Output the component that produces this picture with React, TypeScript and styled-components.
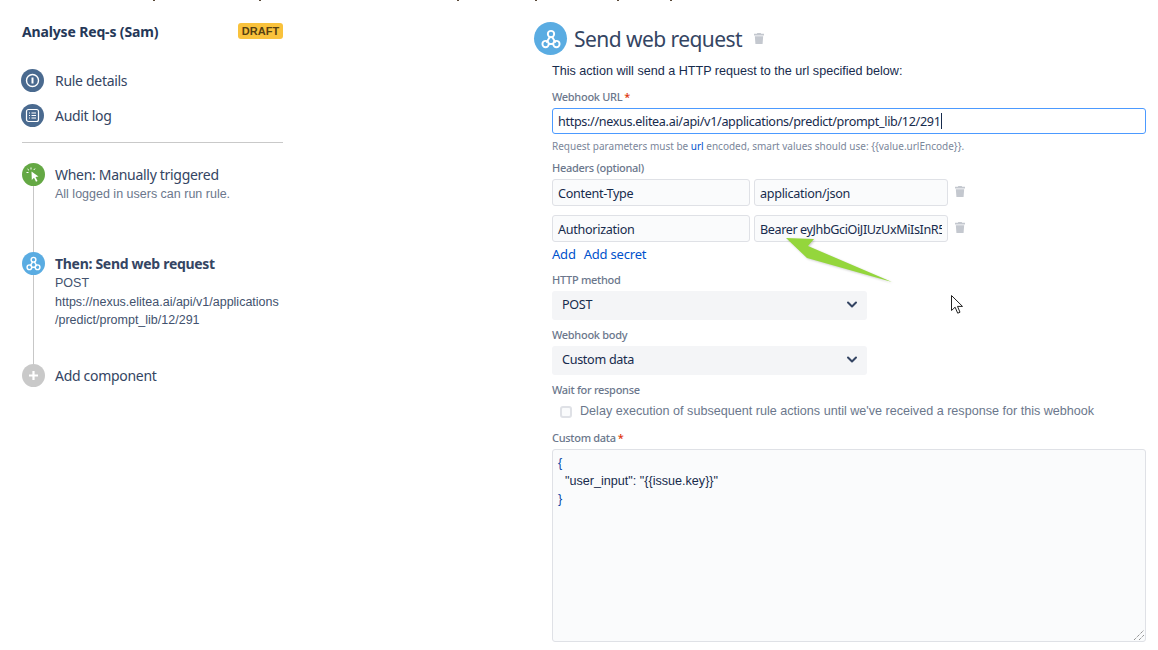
import { ReactNode } from 'react';
import styled, { createGlobalStyle } from 'styled-components';

const GlobalStyle = createGlobalStyle`
  html, body {
    margin: 0;
    padding: 0;
    background: #fff;
    overflow: hidden;
  }
  * {
    box-sizing: border-box;
  }
`;

const Page = styled.div`
  position: relative;
  display: flex;
  width: 1158px;
  height: 650px;
  overflow: hidden;
  font-family: 'Noto Sans', sans-serif;
  color: #253858;
`;

const Speck = styled.span<{ $left: number }>`
  position: absolute;
  top: 0;
  left: ${(p) => p.$left}px;
  width: 2px;
  height: 1px;
  background: #5a4a3a;
`;

const Sidebar = styled.aside`
  width: 534px;
  flex: none;
  padding: 22px 0 0 21px;
`;

const SidebarInner = styled.div`
  width: 262px;
`;

const RuleHeader = styled.div`
  display: flex;
  align-items: flex-start;
  justify-content: space-between;
  padding-left: 1px;
  height: 47px;
`;

const RuleName = styled.div`
  font-size: 14px;
  line-height: 20px;
  font-weight: 700;
  letter-spacing: -0.15px;
  color: #253858;
`;

const DraftBadge = styled.span`
  margin-top: 1px;
  width: 45px;
  height: 16px;
  border-radius: 3px;
  background: #f9c23c;
  color: #574010;
  font-family: 'Liberation Sans', sans-serif;
  font-size: 11px;
  line-height: 16px;
  font-weight: 700;
  text-align: center;
`;

const NavItem = styled.div`
  display: flex;
  align-items: center;
  height: 23px;
  margin-bottom: 12px;
  gap: 11px;
  font-size: 14px;
  letter-spacing: -0.3px;
  color: #344563;
`;

const NavDot = styled.span`
  width: 23px;
  height: 23px;
  border-radius: 50%;
  background: #4a6a8f;
  display: flex;
  align-items: center;
  justify-content: center;
  flex: none;
`;

const Divider = styled.div`
  height: 1px;
  background: #c9c9c9;
  margin: 15px 0 20px 1px;
`;

const Timeline = styled.div`
  position: relative;
  padding-left: 1px;
`;

const TimelineLine = styled.div`
  position: absolute;
  left: 12px;
  top: 12px;
  width: 1px;
  height: 200px;
  background: #c7c7c7;
`;

const Step = styled.div<{ $height: number }>`
  position: relative;
  display: flex;
  gap: 10px;
  height: ${(p) => p.$height}px;
`;

const StepDot = styled.span<{ $color: string }>`
  width: 23px;
  height: 23px;
  border-radius: 50%;
  background: ${(p) => p.$color};
  display: flex;
  align-items: center;
  justify-content: center;
  flex: none;
`;

const StepBody = styled.div`
  padding-top: 2px;
`;

const StepTitle = styled.div<{ $bold?: boolean }>`
  font-size: 14px;
  line-height: 20px;
  letter-spacing: -0.3px;
  color: #344563;
  font-weight: ${(p) => (p.$bold ? 700 : 400)};
`;

const StepText = styled.div`
  font-family: 'Liberation Sans', sans-serif;
  font-size: 12.5px;
  line-height: 18.5px;
  color: #42526e;
  white-space: nowrap;
`;

const StepHint = styled(StepText)`
  color: #6b778c;
`;

const Main = styled.main`
  flex: 1;
  padding-top: 22px;
`;

const ActionHeader = styled.div`
  display: flex;
  align-items: center;
  height: 33px;
  gap: 7px;
`;

const ActionIcon = styled.span`
  width: 33px;
  height: 33px;
  border-radius: 50%;
  background: #5aace2;
  display: flex;
  align-items: center;
  justify-content: center;
  flex: none;
`;

const ActionTitle = styled.h1`
  margin: 0 5px 0 0;
  font-size: 21px;
  line-height: 28px;
  font-weight: 400;
  letter-spacing: -0.55px;
  color: #344563;
`;

const Form = styled.div`
  width: 594px;
  margin-left: 18px;
`;

const Intro = styled.div`
  margin-top: 6px;
  font-family: 'Liberation Sans', sans-serif;
  font-size: 12.6px;
  line-height: 20px;
  color: #172b4d;
`;

const Label = styled.div<{ $top: number }>`
  margin-top: ${(p) => p.$top}px;
  height: 16px;
  font-size: 11px;
  line-height: 16px;
  font-weight: 500;
  letter-spacing: -0.3px;
  color: #6b778c;
`;

const Required = styled.span`
  color: #de350b;
  margin-left: 2px;
`;

const UrlField = styled.div`
  margin-top: 3px;
  width: 594px;
  height: 26px;
  border: 1px solid #4c9aff;
  border-radius: 3px;
  padding-left: 5px;
  font-size: 12.6px;
  letter-spacing: -0.33px;
  line-height: 26px;
  color: #172b4d;
  white-space: nowrap;
`;

const Caret = styled.span`
  display: inline-block;
  width: 1px;
  height: 16px;
  background: #172b4d;
  vertical-align: -3px;
`;

const HelpText = styled.div`
  margin-top: 4px;
  height: 16px;
  font-size: 10px;
  line-height: 16px;
  color: #7a869a;
  white-space: nowrap;
`;

const HelpLink = styled.span`
  color: #0052cc;
`;

const HeaderRow = styled.div<{ $top: number }>`
  margin-top: ${(p) => p.$top}px;
  display: flex;
  align-items: center;
  gap: 4px;
`;

const HeaderField = styled.div<{ $width: number }>`
  width: ${(p) => p.$width}px;
  height: 27px;
  border: 1px solid #dfe1e6;
  border-radius: 3px;
  background: #fafbfc;
  padding: 0 5px;
  font-size: 12.6px;
  letter-spacing: -0.3px;
  line-height: 27px;
  color: #172b4d;
  white-space: nowrap;
`;

const HeaderValue = styled.span`
  display: block;
  overflow: hidden;
  letter-spacing: -0.4px;
`;

const TrashSlot = styled.span`
  margin-left: 3px;
  margin-top: -2px;
  display: flex;
`;

const Links = styled.div`
  display: flex;
  gap: 8px;
  height: 20px;
  margin-top: 2px;
  font-size: 13px;
  letter-spacing: -0.2px;
  line-height: 20px;
  color: #0052cc;
`;

const SelectBox = styled.div`
  margin-top: 3px;
  width: 315px;
  height: 29px;
  border-radius: 3px;
  background: #f4f5f7;
  padding: 0 9px 2px 10px;
  display: flex;
  align-items: center;
  justify-content: space-between;
  font-size: 12.6px;
  letter-spacing: -0.3px;
  color: #172b4d;
`;

const CheckRow = styled.div`
  display: flex;
  align-items: center;
  margin: 3px 0 0 8px;
  height: 20px;
  gap: 8px;
  font-family: 'Liberation Sans', sans-serif;
  font-size: 12.6px;
  color: #6b778c;
  white-space: nowrap;
`;

const CheckBox = styled.span`
  width: 12px;
  height: 12px;
  border: 2px solid #dfe1e6;
  border-radius: 3px;
  background: #fafbfc;
  margin-top: 2px;
  flex: none;
`;

const CustomData = styled.div`
  position: relative;
  margin-top: 3px;
  width: 594px;
  height: 193px;
  border: 1px solid #dfe1e6;
  border-radius: 3px;
  background: #fafbfc;
  padding: 4px 5px;
  font-family: 'Liberation Sans', sans-serif;
  font-size: 12.6px;
  line-height: 18px;
  color: #172b4d;
  white-space: pre;
`;

const Resizer = styled.svg`
  position: absolute;
  right: 0;
  bottom: 0;
`;

const Bracket = styled.span`
  color: #0747a6;
`;

const Arrow = styled.svg`
  position: absolute;
  left: 780px;
  top: 230px;
  pointer-events: none;
  filter: drop-shadow(1px 1px 1px rgba(0, 0, 0, 0.2));
`;

const Cursor = styled.svg`
  position: absolute;
  left: 950px;
  top: 294px;
`;

function Trash({ size = 10 }: { size?: number }) {
  return (
    <svg width={size} height={(size * 14) / 12} viewBox="0 0 12 14" fill="#c4c8cf">
      <path d="M4 0h4l.6 1H12v2H0V1h3.400z" />
      <path d="M1 4h10l-.7 9.200c0 .5-.4.8-.9.8H2.600c-.5 0-.9-.3-.9-.8z" />
    </svg>
  );
}

function Webhook({ size }: { size: number }) {
  return (
    <svg width={size} height={size} viewBox="0 0 24 24" fill="none" stroke="#fff" strokeWidth="2.300" strokeLinecap="round" strokeLinejoin="round">
      <circle cx="12" cy="6" r="3.800" />
      <circle cx="5.500" cy="18" r="3.800" />
      <circle cx="18.500" cy="18" r="3.800" />
      <path d="M10.500 9.500 7 15.500M13.500 9.500l3.500 6M9.300 18h5.400" />
    </svg>
  );
}

function Chevron() {
  return (
    <svg width="12" height="8" viewBox="0 0 12 8" fill="none" stroke="#344563" strokeWidth="2" strokeLinecap="round" strokeLinejoin="round">
      <path d="M2 1.500 6 5.500l4-4" />
    </svg>
  );
}

function Field({ label, top, required, children }: { label: string; top: number; required?: boolean; children: ReactNode }) {
  return (
    <>
      <Label $top={top}>
        {label}
        {required && <Required>*</Required>}
      </Label>
      {children}
    </>
  );
}

// bits of the line of text cut off by the top edge of the screenshot
const specks = [153, 259, 457, 535, 617, 670];

export default function App() {
  return (
    <Page>
      <GlobalStyle />
      {specks.map((left) => (
        <Speck key={left} $left={left} />
      ))}
      <Sidebar>
        <SidebarInner>
          <RuleHeader>
            <RuleName>Analyse Req-s (Sam)</RuleName>
            <DraftBadge>DRAFT</DraftBadge>
          </RuleHeader>
          <NavItem>
            <NavDot>
              <svg width="15" height="15" viewBox="0 0 15 15" fill="none" stroke="#fff" strokeWidth="1.400">
                <circle cx="7.500" cy="7.500" r="6" />
                <path d="M7.500 4.500v6" strokeWidth="2" />
              </svg>
            </NavDot>
            Rule details
          </NavItem>
          <NavItem>
            <NavDot>
              <svg width="15" height="15" viewBox="0 0 15 15" fill="none" stroke="#fff" strokeWidth="1.200">
                <rect x="1.500" y="1.500" width="12" height="12" rx="2" />
                <path d="M4 5h1M6.500 5H11M4 7.500h1M6.500 7.500H11M4 10h1M6.500 10H11" />
              </svg>
            </NavDot>
            Audit log
          </NavItem>
          <Divider />
          <Timeline>
            <TimelineLine />
            <Step $height={89}>
              <StepDot $color="#64a844">
                <svg width="17" height="17" viewBox="0 0 17 17">
                  <path d="M6.500 5.500 13.500 10.500 10.500 11 12.500 15 11 15.800 9 11.800 6.800 14z" fill="#fff" />
                  <path d="M6 1.500v2M2.500 3 4 4.300M1.500 6.500h2M10 2.500 8.800 4" stroke="#fff" strokeWidth="1" fill="none" />
                </svg>
              </StepDot>
              <StepBody>
                <StepTitle>When: Manually triggered</StepTitle>
                <StepHint>All logged in users can run rule.</StepHint>
              </StepBody>
            </Step>
            <Step $height={112}>
              <StepDot $color="#5aace2">
                <Webhook size={15} />
              </StepDot>
              <StepBody>
                <StepTitle $bold>Then: Send web request</StepTitle>
                <StepText>POST</StepText>
                <StepText>https://nexus.elitea.ai/api/v1/applications</StepText>
                <StepText>/predict/prompt_lib/12/291</StepText>
              </StepBody>
            </Step>
            <Step $height={23}>
              <StepDot $color="#c9c9c9">
                <svg width="11" height="11" viewBox="0 0 11 11" stroke="#fff" strokeWidth="2.200">
                  <path d="M5.500 1v9M1 5.500h9" />
                </svg>
              </StepDot>
              <StepBody>
                <StepTitle>Add component</StepTitle>
              </StepBody>
            </Step>
          </Timeline>
        </SidebarInner>
      </Sidebar>
      <Main>
        <ActionHeader>
          <ActionIcon>
            <Webhook size={20} />
          </ActionIcon>
          <ActionTitle>Send web request</ActionTitle>
          <Trash />
        </ActionHeader>
        <Form>
          <Intro>This action will send a HTTP request to the url specified below:</Intro>
          <Field label="Webhook URL" top={8} required>
            <UrlField>
              https://nexus.elitea.ai/api/v1/applications/predict/prompt_lib/12/291
              <Caret />
            </UrlField>
          </Field>
          <HelpText>
            Request parameters must be <HelpLink>url</HelpLink> encoded, smart values should use: {'{{value.urlEncode}}'}.
          </HelpText>
          <Field label="Headers (optional)" top={6}>
            <HeaderRow $top={3}>
              <HeaderField $width={198}>Content-Type</HeaderField>
              <HeaderField $width={194}>application/json</HeaderField>
              <TrashSlot>
                <Trash />
              </TrashSlot>
            </HeaderRow>
          </Field>
          <HeaderRow $top={9}>
            <HeaderField $width={198}>Authorization</HeaderField>
            <HeaderField $width={194}>
              <HeaderValue>Bearer eyJhbGciOiJIUzUxMiIsInR5cCI6</HeaderValue>
            </HeaderField>
            <TrashSlot>
              <Trash />
            </TrashSlot>
          </HeaderRow>
          <Links>
            <span>Add</span>
            <span>Add secret</span>
          </Links>
          <Field label="HTTP method" top={8}>
            <SelectBox>
              POST
              <Chevron />
            </SelectBox>
          </Field>
          <Field label="Webhook body" top={7}>
            <SelectBox>
              Custom data
              <Chevron />
            </SelectBox>
          </Field>
          <Field label="Wait for response" top={7}>
            <CheckRow>
              <CheckBox />
              Delay execution of subsequent rule actions until we've received a response for this webhook
            </CheckRow>
          </Field>
          <Field label="Custom data" top={9} required>
            <CustomData>
              <Bracket>{'{'}</Bracket>
              {'\n  "user_input": "{{issue.key}}"\n'}
              <Bracket>{'}'}</Bracket>
              <Resizer width="12" height="12" viewBox="0 0 12 12" stroke="#666" strokeWidth="1" strokeDasharray="1 1">
                <path d="M1 11 11 1M6 11l5-5" />
              </Resizer>
            </CustomData>
          </Field>
        </Form>
      </Main>
      <Arrow width="120" height="60" viewBox="0 0 120 60">
        <path d="M6 8 34 9 28 16 112 52 27 28z" fill="#94d63c" />
      </Arrow>
      <Cursor width="14" height="22" viewBox="0 0 14 22">
        <path d="M1.500 1.500v15l3.600-3.300 2.600 6 2.300-1-2.500-5.800h5z" fill="#fff" stroke="#222" strokeWidth="1" strokeLinejoin="round" />
      </Cursor>
    </Page>
  );
}
